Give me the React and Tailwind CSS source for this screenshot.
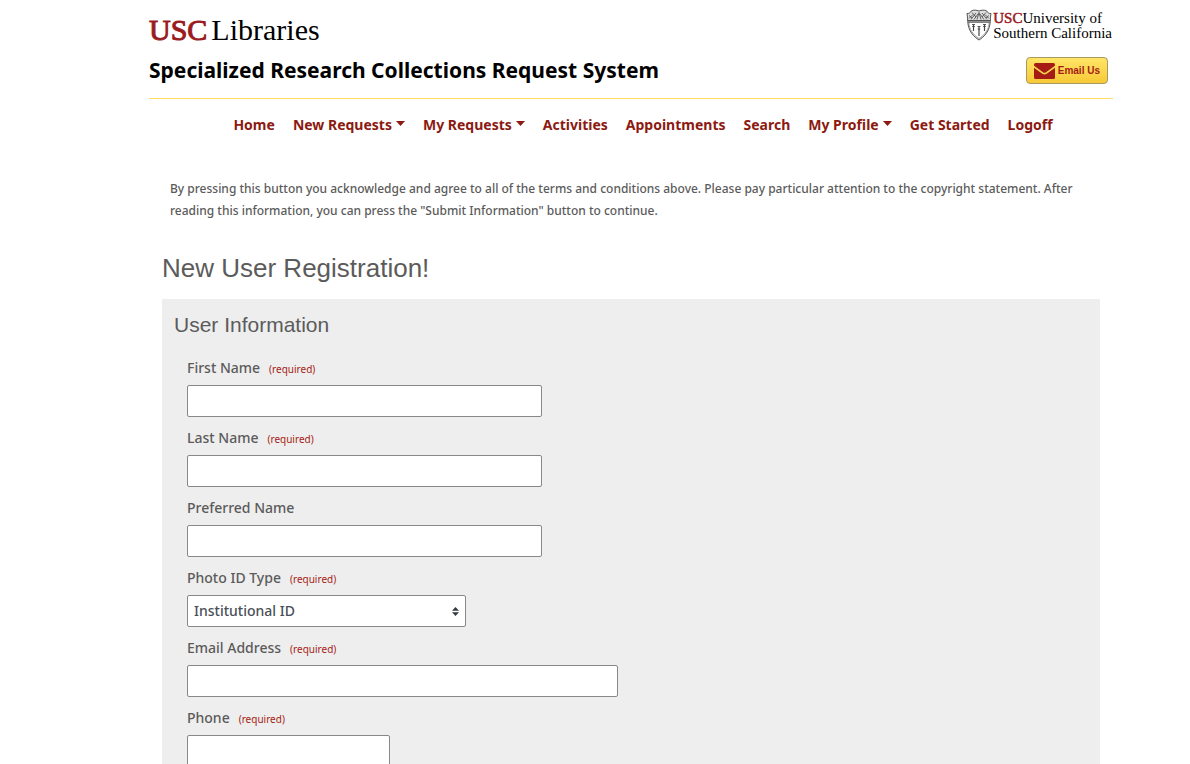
import React from "react";

const navItems = [
  { label: "Home" },
  { label: "New Requests", menu: true },
  { label: "My Requests", menu: true },
  { label: "Activities" },
  { label: "Appointments" },
  { label: "Search" },
  { label: "My Profile", menu: true },
  { label: "Get Started" },
  { label: "Logoff" },
];

function Shield() {
  return (
    <svg viewBox="0 0 26 32" className="h-8 w-[26px]" fill="none" stroke="#444" strokeWidth="0.9" aria-hidden="true">
      <path d="M1 4.5C3.5 4.6 4.5 3.5 5.5 1.8C8 .6 10.500 1.200 13 2C15.500 1.200 18 .6 20.500 1.800C21.500 3.500 22.500 4.600 25 4.500C24.200 8 24.800 11 23.800 16C22.500 23 18 28 13 31C8 28 3.500 23 2.200 16C1.200 11 1.800 8 1 4.500Z" fill="#ddd" />
      <path d="M3 13.300H23C23.400 20 18.500 26 13 29.500C7.500 26 2.600 20 3 13.300Z" fill="#fff" stroke="#777" strokeWidth="0.6" />
      <path d="M1.800 11.500H24.200M2 13H24" />
      <path d="M3 9.500L7 5.500M5 10.500L10 4M8 10.500L12 5M11 10.500L13 3.500L15 10.500M18 10.500L14 5M21 10.500L16 4M23 9.500L19 5.500M6 3.500L10 8M20 3.500L16 8M3 6.500L6 9M23 6.500L20 9" strokeWidth="0.8" />
      <path d="M7.500 15.500V22M13 17.500V27M18.500 15.500V22" strokeWidth="1.200" />
      <path d="M6 15.500H9M6.200 17.500H8.800M11.500 17.500H14.500M11.700 20H14.300M17 15.500H20M17.200 17.500H19.800" />
    </svg>
  );
}

function Field({ id, label, required, children }) {
  return (
    <div className="mb-[9px]">
      <label htmlFor={id} className="mb-[5px] block text-[14px] font-medium leading-6">
        {label}
        {required && <span className="ml-[9px] text-[10px] font-normal leading-none text-[#a61c14]">(required)</span>}
      </label>
      {children}
    </div>
  );
}

function TextField({ id, label, required, type = "text", width }) {
  return (
    <Field id={id} label={label} required={required}>
      <input
        id={id}
        type={type}
        required={required}
        className={`block h-8 max-w-full rounded-[2px] border border-[#888] bg-white px-1.5 text-[14px] ${width}`}
      />
    </Field>
  );
}

export default function App() {
  return (
    <div className="h-screen overflow-hidden bg-white pl-[149px] pr-[77px] font-['Noto_Sans',sans-serif] text-[#5b5b5b]">
      <header className="border-b border-[#ffdd5e] pb-[14px] pt-[9px]">
        <div className="flex items-start justify-between">
          <a href="#libraries" className="flex gap-1 pt-[3px] font-['Liberation_Serif',serif] text-[30px] leading-9 text-black">
            <span className="text-[#991b1e] [-webkit-text-stroke:1px_#991b1e]">USC</span>
            <span>Libraries</span>
          </a>
          <a href="#usc" className="flex gap-px pr-px font-['Liberation_Serif',serif] text-[15px] leading-[15px] text-black">
            <Shield />
            <span className="pt-[2px]">
              <span className="text-[#991b1e] [-webkit-text-stroke:0.5px_#991b1e]">USC</span>
              University of
              <br />
              Southern California
            </span>
          </a>
        </div>
        <div className="mt-[9px] flex items-center justify-between pr-[5px]">
          <h1 className="text-[21px] font-bold leading-[27px] text-black">
            Specialized Research Collections Request System
          </h1>
          <button
            type="button"
            className="flex h-[27px] items-center gap-[3px] rounded-[4px] border border-[#a89a5c] bg-gradient-to-b from-[#ffe566] to-[#f7c935] px-[7px] font-['Liberation_Sans',sans-serif] text-[10px] font-bold text-[#a61c14]"
          >
            <svg viewBox="0 0 21 16" className="h-4 w-[21px]" fill="#a61c14" aria-hidden="true">
              <path d="M1.500 0H19.500Q21 0 21 1.500V2.800L12 9.300Q10.500 10.300 9 9.300L0 2.800V1.500Q0 0 1.500 0Z" />
              <path d="M0 4.700L8.300 10.700Q10.500 12.200 12.700 10.700L21 4.700V14.500Q21 16 19.500 16H1.500Q0 16 0 14.500Z" />
            </svg>
            Email Us
          </button>
        </div>
      </header>

      <nav aria-label="Main" className="flex justify-center gap-[18px] whitespace-nowrap pl-6 pt-[15px] text-[14px] font-bold leading-[22px] text-[#8c1a11]">
        {navItems.map((item) => (
          <a key={item.label} href="#nav" className="flex items-center">
            {item.label}
            {item.menu && (
              <svg viewBox="0 0 9 5" className="mb-1 ml-1 h-[5px] w-[9px]" fill="currentColor" aria-hidden="true">
                <path d="M0 0H9L4.500 5Z" />
              </svg>
            )}
          </a>
        ))}
      </nav>

      <main className="px-[13px]">
        <p className="px-2 pt-[42px] text-[12px] font-medium leading-[22px]">
          By pressing this button you acknowledge and agree to all of the terms and conditions above. Please pay
          particular attention to the copyright statement. After reading this information, you can press the
          "Submit Information" button to continue.
        </p>
        <h2 className="mt-[30px] font-['Liberation_Sans',sans-serif] text-[26px] leading-8">New User Registration!</h2>
        <form className="mt-[15px] bg-[#eee] px-3 pb-10 pt-[13px]">
          <h3 className="font-['Liberation_Sans',sans-serif] text-[21px] leading-[26px]">User Information</h3>
          <div className="px-[13px] pt-[18px]">
            <TextField id="first" label="First Name" required width="w-[355px]" />
            <TextField id="last" label="Last Name" required width="w-[355px]" />
            <TextField id="preferred" label="Preferred Name" width="w-[355px]" />
            <Field id="photo" label="Photo ID Type" required>
              <div className="relative w-[279px] max-w-full">
                <select
                  id="photo"
                  className="block h-8 w-full appearance-none rounded-[2px] border border-[#888] bg-white px-1.5 pb-0.5 text-[14px] font-medium text-[#495057]"
                >
                  <option>Institutional ID</option>
                </select>
                <svg viewBox="0 0 7 9" className="pointer-events-none absolute right-[7px] top-3 h-[9px] w-[7px]" fill="#343a40" aria-hidden="true">
                  <path d="M3.500 0L7 3.700H0ZM3.500 9L0 5.300H7Z" />
                </svg>
              </div>
            </Field>
            <TextField id="email" label="Email Address" required type="email" width="w-[431px]" />
            <TextField id="phone" label="Phone" required type="tel" width="w-[203px]" />
          </div>
        </form>
      </main>
    </div>
  );
}
